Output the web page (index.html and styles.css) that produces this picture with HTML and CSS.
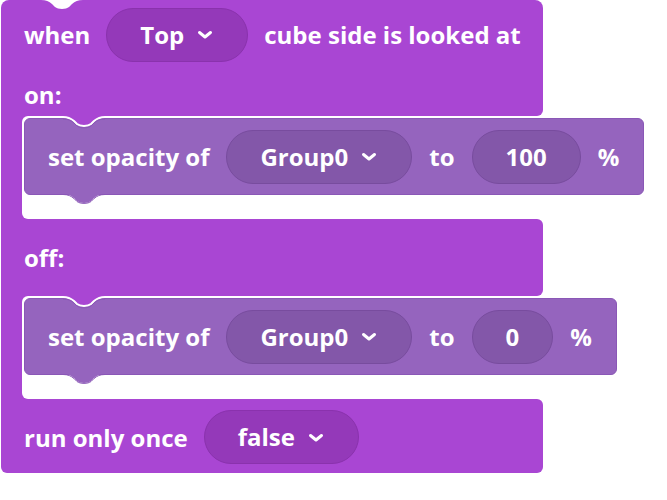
FILE: index.html
```html
<!DOCTYPE html>
<html>
<head>
<meta charset="utf-8">
<link rel="stylesheet" href="styles.css">
</head>
<body>
<div class="block">
  <div class="arm arm-top">
    <svg class="notch" width="42" height="11" viewBox="0 0 42 11"><path d="M0 0 H42 V1 C37 1 34 2.5 31 5 L28 8 C25 10.5 17 10.5 14 8 L11 5 C8 2.5 5 1 0 1 Z" fill="#fff"/></svg>
    <div class="row head">
      <span>when</span>
      <span class="field field-outer dd">Top<svg class="chev" width="16" height="10" viewBox="0 0 16 10"><path d="M2.5 2.5 L8 7 L13.5 2.5" fill="none" stroke="#fff" stroke-width="3" stroke-linecap="round" stroke-linejoin="round"/></svg></span>
      <span>cube side is looked at</span>
    </div>
    <div class="row label">on:</div>
  </div>
  <div class="stmt">
    <div class="spine"></div>
    <div class="slot">
      <div class="inner">
        <svg class="tab" width="42" height="13" viewBox="0 0 42 13"><path d="M0 0 H42 V1 C37 1 34 2.5 31 5 L28 8 C25 10.5 17 10.5 14 8 L11 5 C8 2.5 5 1 0 1 Z" fill="#a946d3"/><path d="M0 1 C5 1 8 2.5 11 5 L14 8 C17 10.5 25 10.5 28 8 L31 5 C34 2.5 37 1 42 1" fill="none" stroke="#fff" stroke-width="2"/><path d="M0 3 C5 3 8 4.5 11 7 L14 10 C17 12.5 25 12.5 28 10 L31 7 C34 4.5 37 3 42 3" fill="none" stroke="#8a57b6" stroke-width="1"/></svg>
        <span>set opacity of</span>
        <span class="field field-inner dd">Group0<svg class="chev" width="16" height="10" viewBox="0 0 16 10"><path d="M2.5 2.5 L8 7 L13.5 2.5" fill="none" stroke="#fff" stroke-width="3" stroke-linecap="round" stroke-linejoin="round"/></svg></span>
        <span>to</span>
        <span class="field field-inner">100</span>
        <span>%</span>
        <svg class="bump" width="42" height="12" viewBox="0 0 42 12"><path d="M0 0 C5 0 8 1.5 11 4 L14 7 C17 9.5 25 9.5 28 7 L31 4 C34 1.5 37 0 42 0 Z" fill="#9564be"/><path d="M0 0.5 C5 0.5 8 2 11 4.5 L14 7.5 C17 10 25 10 28 7.5 L31 4.5 C34 2 37 0.5 42 0.5" fill="none" stroke="#8a57b6" stroke-width="1"/></svg>
      </div>
    </div>
  </div>
  <div class="arm arm-mid">
    <span>off:</span>
  </div>
  <div class="stmt">
    <div class="spine"></div>
    <div class="slot">
      <div class="inner">
        <svg class="tab" width="42" height="13" viewBox="0 0 42 13"><path d="M0 0 H42 V1 C37 1 34 2.5 31 5 L28 8 C25 10.5 17 10.5 14 8 L11 5 C8 2.5 5 1 0 1 Z" fill="#a946d3"/><path d="M0 1 C5 1 8 2.5 11 5 L14 8 C17 10.5 25 10.5 28 8 L31 5 C34 2.5 37 1 42 1" fill="none" stroke="#fff" stroke-width="2"/><path d="M0 3 C5 3 8 4.5 11 7 L14 10 C17 12.5 25 12.5 28 10 L31 7 C34 4.5 37 3 42 3" fill="none" stroke="#8a57b6" stroke-width="1"/></svg>
        <span>set opacity of</span>
        <span class="field field-inner dd">Group0<svg class="chev" width="16" height="10" viewBox="0 0 16 10"><path d="M2.5 2.5 L8 7 L13.5 2.5" fill="none" stroke="#fff" stroke-width="3" stroke-linecap="round" stroke-linejoin="round"/></svg></span>
        <span>to</span>
        <span class="field field-inner">0</span>
        <span>%</span>
        <svg class="bump" width="42" height="12" viewBox="0 0 42 12"><path d="M0 0 C5 0 8 1.5 11 4 L14 7 C17 9.5 25 9.5 28 7 L31 4 C34 1.5 37 0 42 0 Z" fill="#9564be"/><path d="M0 0.5 C5 0.5 8 2 11 4.5 L14 7.5 C17 10 25 10 28 7.5 L31 4.5 C34 2 37 0.5 42 0.5" fill="none" stroke="#8a57b6" stroke-width="1"/></svg>
      </div>
    </div>
  </div>
  <div class="arm arm-bottom">
    <span>run only once</span>
    <span class="field field-outer dd">false<svg class="chev" width="16" height="10" viewBox="0 0 16 10"><path d="M2.5 2.5 L8 7 L13.5 2.5" fill="none" stroke="#fff" stroke-width="3" stroke-linecap="round" stroke-linejoin="round"/></svg></span>
    <svg class="outbump" width="42" height="13" viewBox="0 0 42 13"><path d="M0 0 C5 0 8 1.5 11 4.5 L14 8.5 C17 11.5 25 11.5 28 8.5 L31 4.5 C34 1.5 37 0 42 0 Z" fill="#a946d3"/></svg>
  </div>
</div>
</body>
</html>
```

FILE: styles.css
```css
body {
  margin: 0;
  background: #fff;
  font-family: "Open Sans", "Noto Sans", sans-serif;
  font-weight: 700;
  font-size: 24px;
  color: #fff;
}

.block {
  display: flex;
  flex-direction: column;
  align-items: flex-start;
  padding-left: 1px;
}

.arm {
  position: relative;
  width: 542px;
  box-sizing: border-box;
  background: #a946d3;
  padding-left: 23px;
  white-space: nowrap;
}

.arm-top {
  border-radius: 8px 8px 6px 0;
  padding-top: 7px;
  padding-bottom: 5px;
}

.row {
  display: flex;
  align-items: center;
  white-space: nowrap;
}

.head {
  height: 55px;
  gap: 16px;
}

.label {
  line-height: 33px;
  margin-top: 16px;
}

.notch {
  position: absolute;
  top: -1px;
  left: 40px;
}

.stmt {
  display: flex;
  background: linear-gradient(to right, #a946d3 30px, transparent 30px);
}

.spine {
  width: 21px;
  flex: none;
}

.slot {
  background: #fff;
  border-radius: 6px 0 0 6px;
  padding: 2px 0 24px 2px;
}

.inner {
  position: relative;
  height: 77px;
  box-sizing: border-box;
  background: #9564be;
  border: 1px solid #8a57b6;
  border-radius: 6px;
  padding: 0 24px 0 23px;
  display: flex;
  align-items: center;
  gap: 17px;
  white-space: nowrap;
}

.tab {
  position: absolute;
  top: -3px;
  left: 38px;
}

.bump {
  position: absolute;
  top: 100%;
  left: 38px;
}

.arm-mid {
  height: 77px;
  display: flex;
  align-items: center;
  border-radius: 0 6px 6px 0;
}

.arm-bottom {
  height: 74px;
  box-sizing: border-box;
  padding-top: 2px;
  display: flex;
  align-items: center;
  gap: 16px;
  border-radius: 0 6px 6px 6px;
}

.outbump {
  position: absolute;
  top: 100%;
  left: 40px;
}

.field {
  display: inline-flex;
  align-items: center;
  height: 54px;
  box-sizing: border-box;
  border-radius: 27px;
  padding: 0 33px;
  line-height: 1;
}

.field-outer {
  background: #9439b9;
  border: 1px solid #8a32ad;
}

.field-inner {
  background: #8357a9;
  border: 1px solid #784c9e;
}

.dd {
  gap: 13px;
  padding-right: 34px;
}

.chev {
  display: block;
  margin-top: 1px;
}
```
